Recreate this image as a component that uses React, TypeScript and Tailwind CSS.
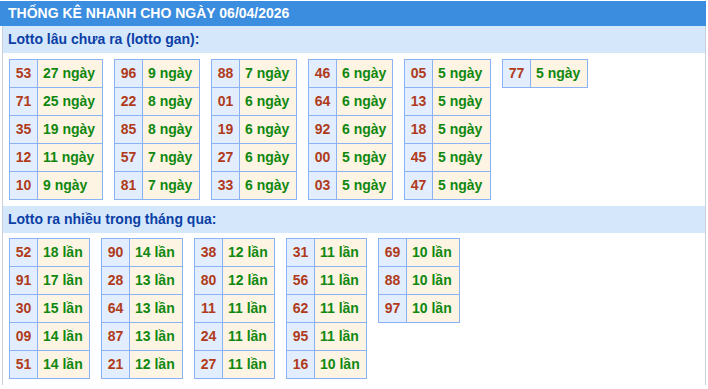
type Pair = [string, string];

interface Block {
  w: string;
  rows: Pair[];
}

// value column widths measured per block (include the right border)
const gan: Block[] = [
  { w: "w-[65px]", rows: [["53", "27 ngày"], ["71", "25 ngày"], ["35", "19 ngày"], ["12", "11 ngày"], ["10", "9 ngày"]] },
  { w: "w-[57px]", rows: [["96", "9 ngày"], ["22", "8 ngày"], ["85", "8 ngày"], ["57", "7 ngày"], ["81", "7 ngày"]] },
  { w: "w-[57px]", rows: [["88", "7 ngày"], ["01", "6 ngày"], ["19", "6 ngày"], ["27", "6 ngày"], ["33", "6 ngày"]] },
  { w: "w-[56px]", rows: [["46", "6 ngày"], ["64", "6 ngày"], ["92", "6 ngày"], ["00", "5 ngày"], ["03", "5 ngày"]] },
  { w: "w-[58px]", rows: [["05", "5 ngày"], ["13", "5 ngày"], ["18", "5 ngày"], ["45", "5 ngày"], ["47", "5 ngày"]] },
  { w: "w-[57px]", rows: [["77", "5 ngày"]] },
];

const nhieu: Block[] = [
  { w: "w-[52px]", rows: [["52", "18 lần"], ["91", "17 lần"], ["30", "15 lần"], ["09", "14 lần"], ["51", "14 lần"]] },
  { w: "w-[53px]", rows: [["90", "14 lần"], ["28", "13 lần"], ["64", "13 lần"], ["87", "13 lần"], ["21", "12 lần"]] },
  { w: "w-[52px]", rows: [["38", "12 lần"], ["80", "12 lần"], ["11", "11 lần"], ["24", "11 lần"], ["27", "11 lần"]] },
  { w: "w-[52px]", rows: [["31", "11 lần"], ["56", "11 lần"], ["62", "11 lần"], ["95", "11 lần"], ["16", "10 lần"]] },
  { w: "w-[53px]", rows: [["69", "10 lần"], ["88", "10 lần"], ["97", "10 lần"]] },
];

function LotoTable({ block }: { block: Block }) {
  return (
    <div className="flex flex-col self-start border-l border-t border-[#8cb2f6]">
      {block.rows.map(([so, val]) => (
        <div key={so} className="flex h-[28px]">
          <div className="flex w-[28px] items-center justify-center border-b border-r border-[#8cb2f6] bg-[#e2eefd] text-[#b03b1c]">{so}</div>
          <div className={`${block.w} flex items-center whitespace-nowrap border-b border-r border-[#8cb2f6] bg-[#fef4e3] pl-[5px] text-[#108810]`}>{val}</div>
        </div>
      ))}
    </div>
  );
}

function Section({ title, blocks, top }: { title: string; blocks: Block[]; top: string }) {
  return (
    <div>
      <div className="flex h-[27px] items-center bg-[#d4e7fb] pl-[5px] text-[#0c3fa6]">{title}</div>
      <div className={`flex gap-[11px] pl-[6px] ${top}`}>
        {blocks.map((b, i) => (
          <LotoTable key={i} block={b} />
        ))}
      </div>
    </div>
  );
}

export default function App() {
  return (
    <div className="min-h-[389px] bg-white pt-px font-['Liberation_Sans',Arial,sans-serif] text-[14px] font-bold">
      <div className="w-[706px]">
        <div className="flex h-[25px] items-center bg-[#3b8de0] px-2 text-white">THỐNG KÊ NHANH CHO NGÀY 06/04/2026</div>
        <div className="ml-[2px] w-[704px] border-x border-[#c8cfdd] pb-[6px]">
          <Section title="Lotto lâu chưa ra (lotto gan):" blocks={gan} top="pt-[6px]" />
          <div className="h-[6px]" />
          <Section title="Lotto ra nhiều trong tháng qua:" blocks={nhieu} top="pt-[5px]" />
        </div>
      </div>
    </div>
  );
}
